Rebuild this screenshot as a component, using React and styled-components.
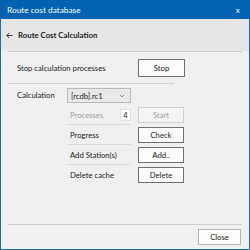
import React from 'react';
import styled, { createGlobalStyle } from 'styled-components';

const GlobalStyle = createGlobalStyle`
  html, body {
    margin: 0;
    padding: 0;
    background: #ffffff;
  }
  * {
    box-sizing: border-box;
  }
`;

const Window = styled.div`
  width: 250px;
  height: 250px;
  display: flex;
  flex-direction: column;
  background: #f0f0f0;
  border: 1px solid #1a6fb5;
  border-top: none;
  font-family: Lato, 'Noto Sans', sans-serif;
  font-size: 7.7px;
  color: #222222;
`;

const TitleBar = styled.div`
  height: 19px;
  margin: 0 -1px;
  padding: 0 10px 0 7px;
  display: flex;
  align-items: center;
  justify-content: space-between;
  background: #0063b1;
  color: #ffffff;
  font-size: 8.3px;
`;

const Header = styled.div`
  height: 32px;
  padding-left: 5px;
  display: flex;
  align-items: center;
  gap: 5px;
  background: #e6e6e6;
  font-weight: bold;
  font-size: 7.8px;
`;

const Body = styled.div`
  flex: 1;
  padding: 0 7px;
  display: flex;
  flex-direction: column;
`;

const Rule = styled.div`
  height: 1px;
  width: ${p => p.$width || '100%'};
  margin-left: ${p => p.$indent || '0'};
  background: ${p => p.$color || '#d2d2d2'};
`;

const Grid = styled.div`
  padding-left: 9px;
  display: grid;
  grid-template-columns: 43px 64px 46px;
  column-gap: 7px;
  align-items: center;
`;

const StopRow = styled(Grid)`
  height: 31px;
`;

const Wide = styled.span`
  grid-column: 1 / 3;
`;

const Label = styled.span`
  grid-column: 1;
`;

const SubCell = styled.div`
  grid-column: 2;
  height: 20px;
  padding-left: 3px;
  display: flex;
  align-items: center;
  justify-content: space-between;
  border-bottom: ${p => (p.$last ? 'none' : '1px solid #d9d9d9')};
  color: ${p => (p.$disabled ? '#9d9d9d' : 'inherit')};
`;

const Button = styled.button`
  height: ${p => (p.$tall ? '18px' : '16px')};
  width: ${p => p.$w || '46px'};
  padding: 0;
  font: inherit;
  background: ${p => (p.$disabled ? '#f4f4f4' : '#fdfdfd')};
  color: ${p => (p.$disabled ? '#a0a0a0' : '#222222')};
  border: 1px solid ${p => (p.$disabled ? '#cfcfcf' : p.$soft ? '#b5b5b5' : '#707070')};
  grid-column: 3;
`;

const Select = styled.div`
  grid-column: 2;
  height: 15px;
  margin: 4px 0 2px;
  padding: 0 5px 0 3px;
  display: flex;
  align-items: center;
  justify-content: space-between;
  background: #e9e9e9;
  border: 1px solid #b8b8b8;
`;

const Count = styled.span`
  width: 11px;
  height: 12px;
  display: flex;
  align-items: center;
  justify-content: center;
  background: #ffffff;
  border: 1px solid #e2e2e2;
  color: #222222;
`;

const Footer = styled.div`
  height: 24px;
  padding: 0 8px;
  display: flex;
  align-items: center;
  justify-content: flex-end;
`;

const rows = [
  { label: 'Processes', action: 'Start', disabled: true, count: 4 },
  { label: 'Progress', action: 'Check' },
  { label: 'Add Station(s)', action: 'Add..' },
  { label: 'Delete cache', action: 'Delete', last: true },
];

export default function App() {
  return (
    <>
      <GlobalStyle />
      <Window>
        <TitleBar>
          <span>Route cost database</span>
          <span>x</span>
        </TitleBar>
        <Header>
          <svg width="7" height="7" viewBox="0 0 7 7">
            <path d="M6.5 3.5H0.8M3.3 1L0.8 3.5L3.3 6" stroke="#222222" strokeWidth="0.9" fill="none" />
          </svg>
          <span>Route Cost Calculation</span>
        </Header>
        <Body>
          <Rule $color="#cdcdcd" />
          <StopRow>
            <Wide>Stop calculation processes</Wide>
            <Button $tall $w="47px">Stop</Button>
          </StopRow>
          <Rule $width="166px" />
          <Grid>
            <Label>Calculation</Label>
            <Select>
              <span>[rcdb].rc1</span>
              <svg width="6" height="4" viewBox="0 0 6 4">
                <path d="M0.8 0.8L3 3L5.2 0.8" stroke="#707070" strokeWidth="0.8" fill="none" />
              </svg>
            </Select>
            {rows.map(r => (
              <React.Fragment key={r.label}>
                <SubCell $disabled={r.disabled} $last={r.last}>
                  <span>{r.label}</span>
                  {r.count && <Count>{r.count}</Count>}
                </SubCell>
                <Button $disabled={r.disabled}>{r.action}</Button>
              </React.Fragment>
            ))}
          </Grid>
        </Body>
        <Rule $color="#cdcdcd" $width="234px" $indent="7px" />
        <Footer>
          <Button $soft $w="43px">Close</Button>
        </Footer>
      </Window>
    </>
  );
}
